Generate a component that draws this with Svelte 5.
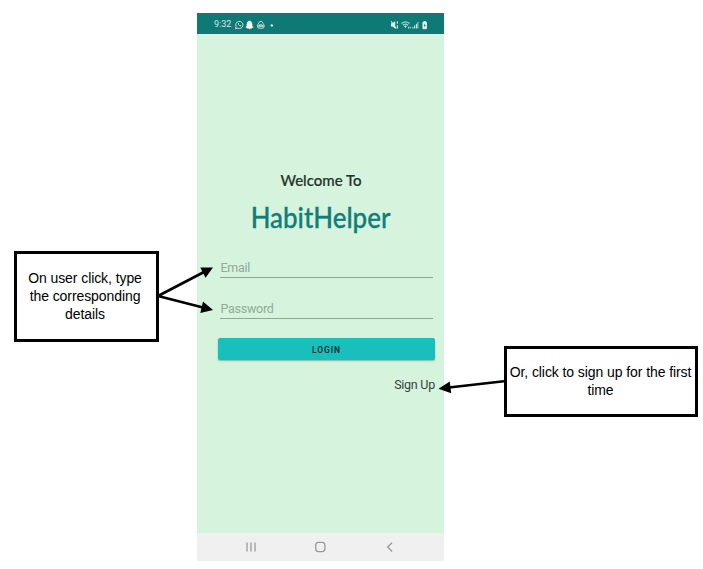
<script>
  const notes = {
    details: ['On user click, type', 'the corresponding', 'details'],
    signup: ['Or, click to sign up for the first', 'time']
  };
  const fields = ['Email', 'Password'];
</script>

<main class="board">
  <aside class="note details">
    {#each notes.details as line}<span>{line}</span>{/each}
  </aside>

  <section class="phone">
    <header class="status">
      <span class="clock">9:32</span>
      <svg class="apps" width="42" height="12" viewBox="0 0 42 12" fill="none" stroke="#c5dfdc">
        <path d="M1.500 9.800 2.100 7.500A3.600 3.600 0 1 1 3.800 9.200Z" stroke-width="1" />
        <path d="M3.900 4.300c.1 1.800 1.100 2.900 2.900 3.300l.7-.9-1.100-.6-.5.4c-.6-.3-.9-.7-1.100-1.200l.4-.5-.4-.9Z" fill="#c5dfdc" stroke="none" />
        <path d="M15.500 2c-1.500 0-2.300 1-2.300 2.300v1.200l-.8.3.8.7c-.2.8-.8 1.400-1.600 1.700l1.500.6.4.6 1-.1 1 .7 1-.7 1 .1.400-.6 1.500-.6c-.8-.3-1.400-.9-1.600-1.700l.8-.7-.8-.3V4.300C17.800 3 17 2 15.500 2Z" fill="#fff" stroke="#fff" stroke-width=".4" />
        <path d="M25.700 2.500h2.200l2.500 4.300-1.100 2.400h-5L23.200 6.800Z M25.700 5.700h2.200l1.100 2h-4.400Z M23.400 6.800h6.900" stroke-width=".9" />
        <circle cx="37.800" cy="6.400" r="1.200" fill="#e0efed" stroke="none" />
      </svg>
      <svg class="signals" width="39" height="12" viewBox="0 0 39 12" fill="#c5dfdc">
        <path d="M0 4.200h1.600L4.200 2v7.500L1.600 7.400H0Z" fill="#e5f1f0" />
        <path d="m.2 2.200 5 7.400M6.400 2.200v2.500M6.400 6.200v3.400" fill="none" stroke="#d5e8e6" stroke-width="1.100" />
        <path d="M10.500 4.500q4-3.300 8 0M11.900 6.200q2.600-2.100 5.200 0" fill="none" stroke="#a6cdca" stroke-width="1.400" />
        <path d="m12.900 7.100 1.600 2 1.500-2q-1.500-1-3.100 0ZM17.100 7.800h1v1.700h-1ZM18.700 7.800h1v1.700h-1Z" />
        <path d="M21.200 8h1.200v1.500h-1.200ZM23 6.600h1.200v2.900H23ZM24.900 4.800h1.200v4.700h-1.200ZM26.500 3h.8v6.500h-.8Z" />
        <path d="M31.900 3.300h.9v-.8h1.800v.8h.9v6.400h-3.600Z" fill="#edf6f5" stroke="#edf6f5" stroke-width=".8" />
        <path d="m34 4.300-1.300 2.400h.9L33.400 8.600l1.500-2.600H34Z" fill="#0f7975" />
      </svg>
    </header>

    <div class="screen">
      <p class="welcome"><span>Welcome To</span></p>
      <h1><span>HabitHelper</span></h1>
      <form onsubmit={(e) => e.preventDefault()}>
        {#each fields as field}
          <div class="field"><span>{field}</span></div>
        {/each}
        <button>LOGIN</button>
      </form>
      <div class="signup"><span>Sign Up</span></div>
    </div>

    <footer class="nav">
      <svg width="247" height="28" viewBox="0 0 247 28" fill="none" stroke="#999">
        <path d="M50 9.500v9M54 9.500v9M58 9.500v9" stroke-width="1.300" />
        <rect x="118.700" y="9.400" width="9.200" height="9.200" rx="2.800" stroke-width="1.300" />
        <path d="m195 9.700-4.300 4.400 4.300 4.400" stroke-width="1.400" />
      </svg>
    </footer>
  </section>

  <aside class="note link">
    {#each notes.signup as line}<span>{line}</span>{/each}
  </aside>

  <svg class="arrows" width="703" height="569" viewBox="0 0 703 569">
    <g stroke="#000" stroke-width="2.700">
      <path d="M158 296 204 272M158 296 203 307.500M506 381 449 387.500" />
    </g>
    <path d="M213 267.500 205.500 277.700 200.300 267.600ZM213 310 200.300 312.900 203 301.600ZM438.500 388.700 449.800 381.500 451.200 393.300Z" />
  </svg>
</main>

<style>
  :global(body) { background: #fff; }
  .board {
    position: relative;
    display: flex;
    align-items: flex-start;
    box-sizing: border-box;
    width: 703px;
    height: 569px;
    padding: 13px 5px 0 14px;
    overflow: hidden;
    font-family: Roboto, sans-serif;
  }
  .note {
    display: flex;
    flex: none;
    flex-direction: column;
    align-items: center;
    justify-content: center;
    box-sizing: border-box;
    padding-bottom: 2px;
    border: 3px solid #000;
    background: #fff;
    color: #000;
    font: 14px/18px "Liberation Sans", sans-serif;
    letter-spacing: -.08px;
    white-space: nowrap;
  }
  .details { width: 145px; height: 91px; margin: 238px 38px 0 0; padding-right: 3px; }
  .link { width: 194px; height: 71px; margin: 333px 0 0 60px; padding-right: 1px; }
  .phone {
    display: flex;
    flex: none;
    flex-direction: column;
    width: 247px;
    height: 548px;
    background: #d5f3dd;
  }
  .status {
    display: flex;
    align-items: center;
    box-sizing: border-box;
    height: 20.500px;
    padding: 2px 14px 0 17px;
    background: #0f7975;
    color: #d5e8e6;
    font-size: 9px;
  }
  .clock { width: 20px; }
  .signals { margin-left: auto; }
  .status svg { flex: none; margin-top: 1px; }
  .screen { flex: 1; padding: 136px 9px 0 21px; }
  p, h1 { display: flex; justify-content: center; margin: 0; white-space: nowrap; }
  h1 span { transform: scaleX(.925); }
  .welcome { height: 20px; padding-right: 11px; color: #26332d; font: 500 15px/20px Lato, sans-serif; -webkit-text-stroke: .2px #26332d; }
  h1 { height: 36px; margin-top: 9px; padding-right: 11px; color: #117d79; font: 500 28px/36px Lato, sans-serif; -webkit-text-stroke: .3px #117d79; }
  form { margin-top: 21px; }
  .field {
    box-sizing: border-box;
    width: 213px;
    height: 22px;
    margin: 0 0 19px 2px;
    padding-left: .5px;
    border-bottom: 1px solid #8ba996;
    color: #91aa99;
    font-size: 12.500px;
    letter-spacing: -.27px;
    line-height: 24px;
  }
  button {
    display: block;
    width: 217px;
    height: 22px;
    padding: 0;
    border: 0;
    border-radius: 2px;
    background: #19bfbd;
    box-shadow: 0 1px 1.500px #568e8299;
    color: #12312f;
    font: 600 8.500px/24px Roboto, sans-serif;
    letter-spacing: .9px;
  }
  .signup { margin-top: 17px; color: #34463b; font-size: 12.500px; letter-spacing: -.25px; line-height: 16px; text-align: right; }
  .nav { height: 28px; background: #f0f0f0; }
  .nav svg { display: block; }
  .arrows { position: absolute; inset: 0; pointer-events: none; }
</style>
